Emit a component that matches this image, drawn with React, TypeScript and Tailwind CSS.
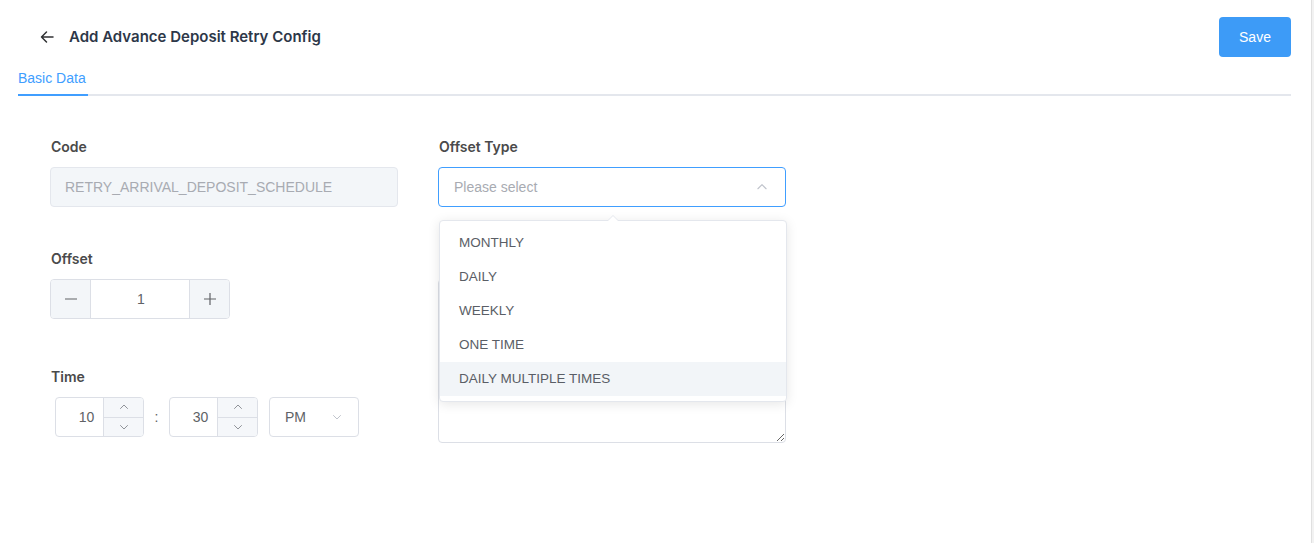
import React from "react";

const ChevUp = ({ className = "" }: { className?: string }) => (
  <svg viewBox="0 0 12 12" className={className} fill="none" stroke="currentColor" strokeWidth="1" strokeLinecap="round" strokeLinejoin="round">
    <path d="M2.5 7.5 L6 4 L9.5 7.5" />
  </svg>
);
const ChevDown = ({ className = "" }: { className?: string }) => (
  <svg viewBox="0 0 12 12" className={className} fill="none" stroke="currentColor" strokeWidth="1" strokeLinecap="round" strokeLinejoin="round">
    <path d="M2.5 4.5 L6 8 L9.5 4.5" />
  </svg>
);

function Spinner({ value }: { value: string }) {
  return (
    <div className="flex h-[40px] w-[89px] rounded-[4px] border border-[#dcdfe6] overflow-hidden bg-white">
      <div className="flex-1 flex items-center justify-center pl-[14px] text-[14px] text-[#606266]">{value}</div>
      <div className="w-[40px] flex flex-col border-l border-[#dcdfe6] bg-[#f5f7fa]">
        <div className="flex-1 flex items-center justify-center border-b border-[#dcdfe6] text-[#909399]">
          <ChevUp className="w-[12px] h-[12px]" />
        </div>
        <div className="flex-1 flex items-center justify-center text-[#909399]">
          <ChevDown className="w-[12px] h-[12px]" />
        </div>
      </div>
    </div>
  );
}

export default function App() {
  const items = ["MONTHLY", "DAILY", "WEEKLY", "ONE TIME", "DAILY MULTIPLE TIMES"];
  return (
    <div className="relative w-[1314px] h-[543px] bg-white overflow-hidden flex" style={{ fontFamily: '"Liberation Sans", Arial, sans-serif' }}>
      <div className="flex-1 pl-[18px] pr-[20px]">
        {/* Header */}
        <div className="flex items-center justify-between pt-[17px] h-[57px]">
          <div className="flex items-center pl-[21px]">
            <svg viewBox="0 0 16 16" className="w-[16px] h-[16px] text-[#303133]" fill="none" stroke="currentColor" strokeWidth="1.5" strokeLinecap="round" strokeLinejoin="round">
              <path d="M14 8 H2.5 M7.5 3 L2.5 8 L7.5 13" />
            </svg>
            <span className="ml-[14px] text-[15px] font-semibold text-[#2d3748]" style={{ fontFamily: "Inter, sans-serif" }}>
              Add Advance Deposit Retry Config
            </span>
          </div>
          <button className="w-[72px] h-[40px] rounded-[4px] bg-[#3d9bf7] text-white text-[14px]">Save</button>
        </div>
        {/* Tabs */}
        <div className="flex mt-[10px] border-b-2 border-[#e4e7ed] w-full">
          <div className="h-[29px] pb-[4px] flex items-center -mb-[2px] border-b-2 border-[#409eff] text-[14px] text-[#409eff] w-[70px]">
            Basic Data
          </div>
        </div>

        {/* Form */}
        <div className="flex gap-[40px] pl-[32px] mt-[41px]">
          <div className="w-[348px] flex flex-col">
            <label className="h-[20px] leading-[20px] text-[14px] font-semibold text-[#4a4a4a] pl-[1px]" style={{ fontFamily: "Inter, sans-serif" }}>Code</label>
            <div className="mt-[10px] h-[40px] rounded-[4px] border border-[#e4e7ed] bg-[#f3f6f9] flex items-center px-[14px] text-[14px] text-[#a8abb2]">
              RETRY_ARRIVAL_DEPOSIT_SCHEDULE
            </div>

            <label className="mt-[42px] h-[20px] leading-[20px] text-[14px] font-semibold text-[#4a4a4a] pl-[1px]" style={{ fontFamily: "Inter, sans-serif" }}>Offset</label>
            <div className="mt-[10px] h-[40px] w-[180px] rounded-[4px] border border-[#dcdfe6] flex overflow-hidden">
              <div className="w-[40px] bg-[#f3f6f9] border-r border-[#dcdfe6] flex items-center justify-center text-[#606266]">
                <svg viewBox="0 0 14 14" className="w-[14px] h-[14px]" stroke="currentColor" strokeWidth="1.2"><path d="M1 7 H13" /></svg>
              </div>
              <div className="flex-1 flex items-center justify-center pl-[2px] text-[14px] text-[#606266]">1</div>
              <div className="w-[40px] bg-[#f3f6f9] border-l border-[#dcdfe6] flex items-center justify-center text-[#606266]">
                <svg viewBox="0 0 14 14" className="w-[14px] h-[14px]" stroke="currentColor" strokeWidth="1.2"><path d="M1 7 H13 M7 1 V13" /></svg>
              </div>
            </div>

            <label className="mt-[48px] h-[20px] leading-[20px] text-[14px] font-semibold text-[#4a4a4a] pl-[1px]" style={{ fontFamily: "Inter, sans-serif" }}>Time</label>
            <div className="mt-[10px] flex items-center pl-[5px]">
              <Spinner value="10" />
              <span className="w-[25px] text-center text-[14px] text-[#606266]">:</span>
              <Spinner value="30" />
              <div className="ml-[11px] w-[90px] h-[40px] rounded-[4px] border border-[#dcdfe6] flex items-center justify-between pl-[15px] pr-[15px] text-[14px] text-[#606266]">
                <span>PM</span>
                <ChevDown className="w-[12px] h-[12px] text-[#c0c4cc]" />
              </div>
            </div>
          </div>

          <div className="w-[348px] flex flex-col">
            <label className="h-[20px] leading-[20px] text-[14px] font-semibold text-[#4a4a4a] pl-[1px]" style={{ fontFamily: "Inter, sans-serif" }}>Offset Type</label>
            <div className="mt-[10px] h-[40px] rounded-[4px] border border-[#409eff] flex items-center justify-between pl-[15px] pr-[16px] text-[14px] text-[#a8abb2]">
              <span>Please select</span>
              <ChevUp className="w-[14px] h-[14px] text-[#c0c4cc]" />
            </div>
            <div className="mt-[42px] h-[20px]" />
            <textarea className="mt-[10px] h-[164px] rounded-[4px] border border-[#dcdfe6] outline-none" />
          </div>
        </div>
      </div>
      {/* scrollbar strip */}
      <div className="w-[3px] h-full bg-[#f2f2f2] border-l border-[#e0e0e0]" />

      {/* Dropdown */}
      <div className="absolute left-[439px] top-[220px] w-[348px] h-[182px] bg-white border border-[#e4e7ed] rounded-[4px] shadow-[0_2px_12px_0_rgba(0,0,0,0.1)] pt-[5px]">
        <div className="absolute -top-[6px] left-[167px] w-0 h-0 border-x-[6px] border-x-transparent border-b-[6px] border-b-[#e4e7ed]" />
        <div className="absolute -top-[5px] left-[168px] w-0 h-0 border-x-[5px] border-x-transparent border-b-[5px] border-b-white" />
        {items.map((it, i) => (
          <div
            key={it}
            className={`h-[34px] flex items-center pl-[19px] text-[13.5px] text-[#5a5e66] ${i === 4 ? "bg-[#f2f5f8]" : ""}`}
          >
            {it}
          </div>
        ))}
      </div>
    </div>
  );
}
